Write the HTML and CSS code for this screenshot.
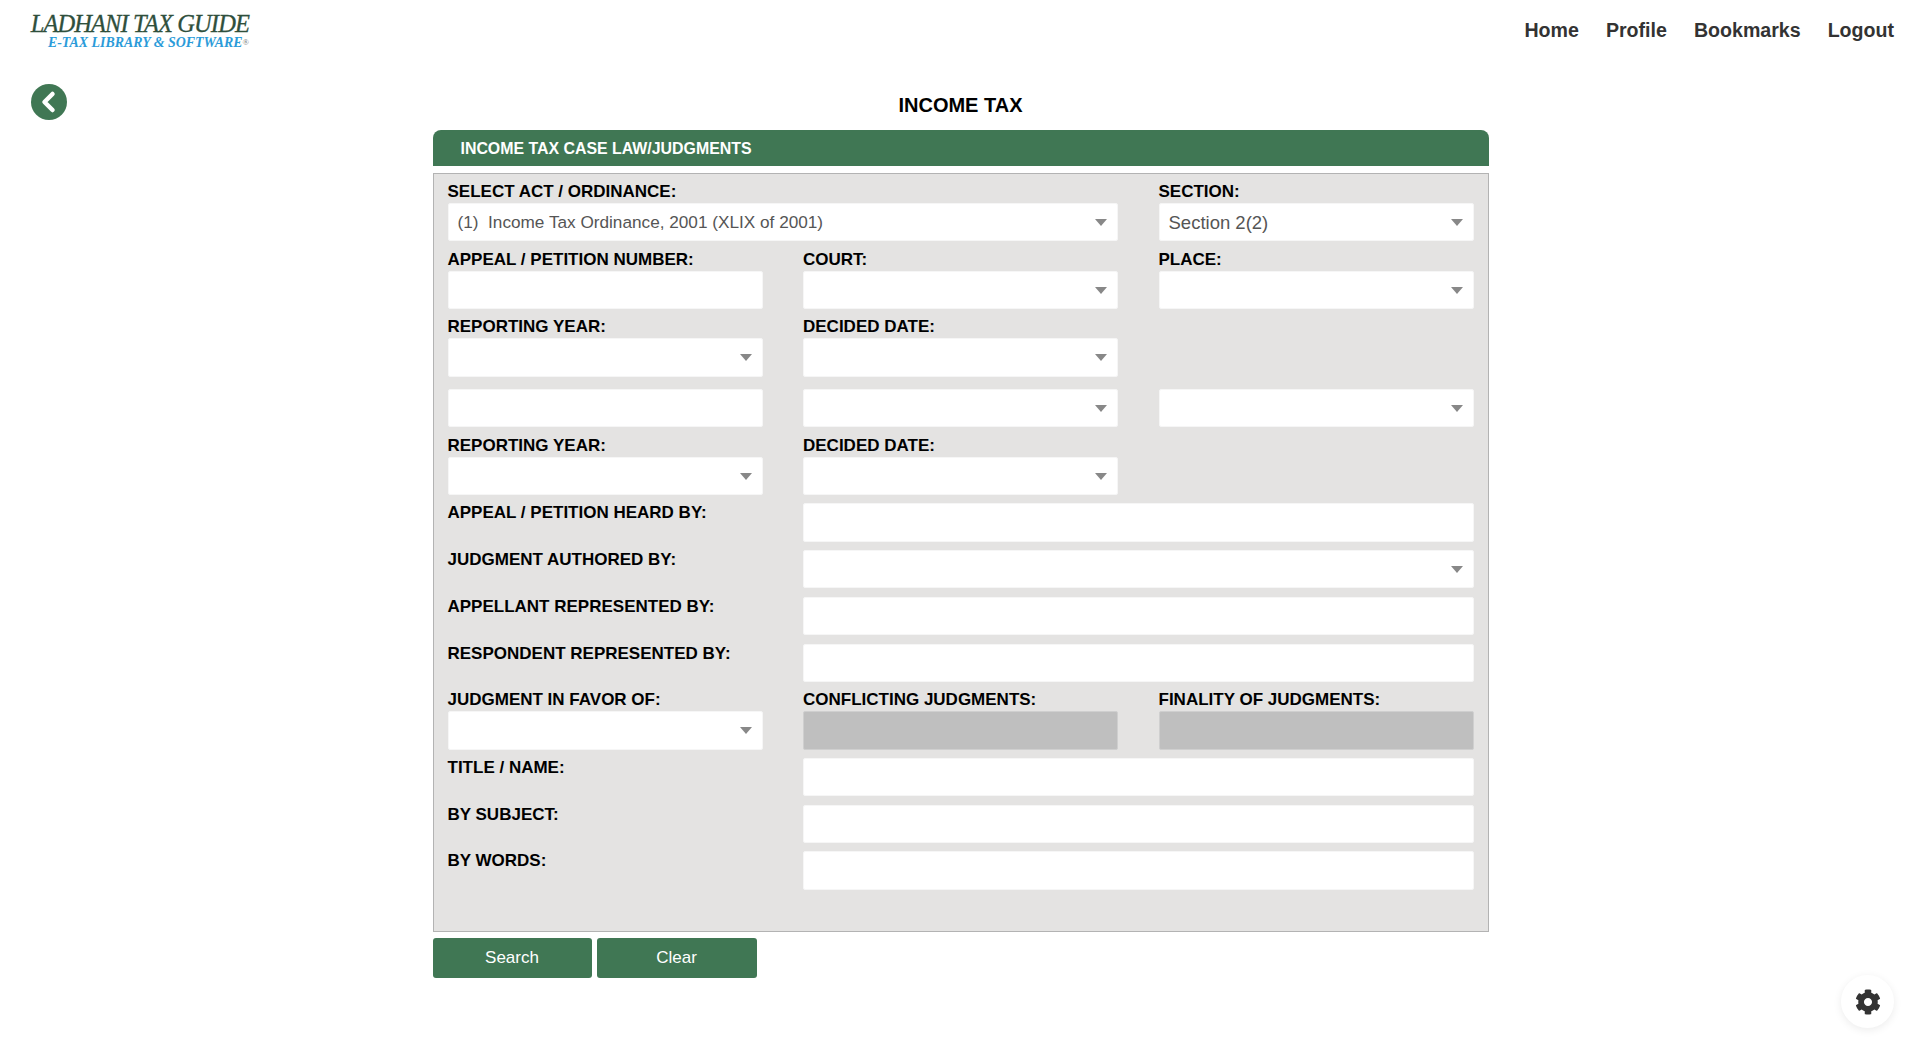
FILE: index.html
```html
<!DOCTYPE html>
<html lang="en">
<head>
  <meta charset="UTF-8">
  <title>Income Tax Case Law/Judgments</title>
  <link rel="stylesheet" href="styles.css">
</head>
<body>

  <!-- top bar -->
  <header class="topbar">
    <a class="logo" href="#">
      <span class="logo-main">LADHANI TAX GUIDE</span>
      <span class="logo-sub">E-TAX LIBRARY &amp; SOFTWARE<sup>®</sup></span>
    </a>
    <nav class="nav">
      <a href="#">Home</a>
      <a href="#">Profile</a>
      <a href="#">Bookmarks</a>
      <a href="#">Logout</a>
    </nav>
  </header>

  <div class="page">
    <div class="back-col">
      <a class="back" href="#" aria-label="Back">
        <svg viewBox="0 0 36 36" width="36" height="36"><path d="M21.5 10 L13.5 18 L21.5 26" fill="none" stroke="#fff" stroke-width="4.5" stroke-linecap="round" stroke-linejoin="round"/></svg>
      </a>
    </div>

    <main class="main">
      <h1 class="title">INCOME TAX</h1>
      <div class="panel-head">INCOME TAX CASE LAW/JUDGMENTS</div>

      <form class="panel">
        <div class="row">
          <div class="field span-2">
            <label>SELECT ACT / ORDINANCE:</label>
            <div class="select"><select><option>(1)&nbsp; Income Tax Ordinance, 2001 (XLIX of 2001)</option></select></div>
          </div>
          <div class="field">
            <label>SECTION:</label>
            <div class="select big"><select><option>Section 2(2)</option></select></div>
          </div>
        </div>

        <div class="row">
          <div class="field">
            <label>APPEAL / PETITION NUMBER:</label>
            <input type="text">
          </div>
          <div class="field">
            <label>COURT:</label>
            <div class="select"><select></select></div>
          </div>
          <div class="field">
            <label>PLACE:</label>
            <div class="select"><select></select></div>
          </div>
        </div>

        <div class="row">
          <div class="field">
            <label>REPORTING YEAR:</label>
            <div class="select"><select></select></div>
          </div>
          <div class="field">
            <label>DECIDED DATE:</label>
            <div class="select"><select></select></div>
          </div>
        </div>

        <div class="row no-label">
          <input type="text">
          <div class="select"><select></select></div>
          <div class="select"><select></select></div>
        </div>

        <div class="row">
          <div class="field">
            <label>REPORTING YEAR:</label>
            <div class="select"><select></select></div>
          </div>
          <div class="field">
            <label>DECIDED DATE:</label>
            <div class="select"><select></select></div>
          </div>
        </div>

        <div class="row inline">
          <label>APPEAL / PETITION HEARD BY:</label>
          <input class="span-2" type="text">
        </div>
        <div class="row inline">
          <label>JUDGMENT AUTHORED BY:</label>
          <div class="select span-2"><select></select></div>
        </div>
        <div class="row inline">
          <label>APPELLANT REPRESENTED BY:</label>
          <input class="span-2" type="text">
        </div>
        <div class="row inline">
          <label>RESPONDENT REPRESENTED BY:</label>
          <input class="span-2" type="text">
        </div>

        <div class="row">
          <div class="field">
            <label>JUDGMENT IN FAVOR OF:</label>
            <div class="select"><select></select></div>
          </div>
          <div class="field">
            <label>CONFLICTING JUDGMENTS:</label>
            <input type="text" disabled>
          </div>
          <div class="field">
            <label>FINALITY OF JUDGMENTS:</label>
            <input type="text" disabled>
          </div>
        </div>

        <div class="row inline">
          <label>TITLE / NAME:</label>
          <input class="span-2" type="text">
        </div>
        <div class="row inline">
          <label>BY SUBJECT:</label>
          <input class="span-2" type="text">
        </div>
        <div class="row inline">
          <label>BY WORDS:</label>
          <input class="span-2" type="text">
        </div>
      </form>

      <div class="actions">
        <button type="button" class="btn">Search</button>
        <button type="button" class="btn">Clear</button>
      </div>
    </main>
  </div>

  <!-- floating settings button -->
  <button type="button" class="settings" aria-label="Settings">
    <svg viewBox="0 0 512 512" width="26" height="26"><path fill="#333" d="M487.4 315.7l-42.6-24.6c4.3-23.2 4.3-47 0-70.2l42.6-24.6c4.9-2.8 7.1-8.6 5.5-14-11.1-35.6-30-67.8-54.7-94.6-3.8-4.1-10-5.1-14.8-2.3L380.8 110c-17.9-15.4-38.5-27.3-60.8-35.1V25.8c0-5.6-3.9-10.5-9.4-11.7-36.7-8.2-74.3-7.8-109.2 0-5.5 1.2-9.4 6.1-9.4 11.7V75c-22.2 7.9-42.8 19.8-60.8 35.1L88.7 85.5c-4.9-2.8-11-1.9-14.8 2.3-24.7 26.7-43.6 58.9-54.7 94.6-1.7 5.4.6 11.2 5.5 14L67.3 221c-4.3 23.2-4.3 47 0 70.2l-42.6 24.6c-4.9 2.8-7.1 8.6-5.5 14 11.1 35.6 30 67.8 54.7 94.6 3.8 4.1 10 5.1 14.8 2.3l42.6-24.6c17.9 15.4 38.5 27.3 60.8 35.1v49.2c0 5.6 3.9 10.5 9.4 11.7 36.7 8.2 74.3 7.8 109.2 0 5.5-1.2 9.4-6.1 9.4-11.7v-49.2c22.2-7.9 42.8-19.8 60.8-35.1l42.6 24.6c4.9 2.8 11 1.9 14.8-2.3 24.7-26.7 43.6-58.9 54.7-94.6 1.5-5.5-.7-11.3-5.6-14.1zM256 336c-44.1 0-80-35.9-80-80s35.9-80 80-80 80 35.9 80 80-35.9 80-80 80z"/></svg>
  </button>

</body>
</html>
```

FILE: styles.css
```css
* { box-sizing: border-box; }
body { margin: 0; background: #fff; color: #000; font-family: "Liberation Sans", Arial, sans-serif; }
a { text-decoration: none; }

.topbar { display: flex; justify-content: space-between; align-items: flex-start; height: 84px; padding: 13px 27px 0 26px; }
.logo { display: flex; flex-direction: column; align-items: flex-end; width: 223px; font-family: "Liberation Serif", serif; font-style: italic; }
.logo-main { font-size: 24.5px; line-height: 22px; color: #2f4f3c; letter-spacing: -0.9px; white-space: nowrap; -webkit-text-stroke: 0.3px #2f4f3c; }
.logo-sub { margin-top: 1px; font-size: 13.9px; line-height: 13px; font-weight: bold; color: #2b9bd9; white-space: nowrap; }
.logo-sub sup { font-size: 8.5px; line-height: 0; vertical-align: 2px; color: #777; font-style: normal; font-weight: normal; }
.nav { display: flex; gap: 27px; padding-top: 6px; }
.nav a { font-size: 19.6px; font-weight: bold; color: #333; }

.page { display: grid; grid-template-columns: 1fr 1056px 1fr; }
.back-col { padding-left: 31px; }
.back { display: block; width: 36px; height: 36px; border-radius: 50%; background: #407754; }
.back svg { display: block; }

.title { margin: 8px 0 13px; font-size: 20px; line-height: 26px; height: 25px; font-weight: bold; text-align: center; }
.panel-head { height: 36px; padding-left: 28px; border-radius: 8px 8px 0 0; background: #407754; color: #fff; font-size: 15.9px; font-weight: bold; line-height: 37px; }

.panel { margin-top: 7px; height: 759px; padding: 7px 14px 0; border: 1px solid #b3b3b3; background: #e4e3e2; }
.row { display: grid; grid-template-columns: repeat(3, 1fr); column-gap: 40.5px; margin-bottom: 7.2px; }
.row.no-label { margin-top: 12.4px; }
.row.inline { padding-top: 1.2px; }
.span-2 { grid-column: span 2; }
.field label { display: block; height: 22px; line-height: 21px; }
label { font-size: 17px; font-weight: bold; white-space: nowrap; }
.inline label { line-height: 20px; }

input, select { display: block; width: 100%; height: 38.4px; border: 1px solid #f6f6f6; border-radius: 2px; background: #fff; font-family: inherit; }
input:disabled { border-color: #cfcfcf; background: #bfbfbf; }
.select { position: relative; }
.select select { appearance: none; padding: 0 30px 0 9px; font-size: 17.2px; color: #555; }
.select.big select { font-size: 18.5px; }
.select::after { content: ""; position: absolute; right: 11px; top: 16px; border-style: solid; border-width: 7px 6px 0; border-color: #888 transparent transparent; }

.actions { display: flex; gap: 5px; margin-top: 6px; padding-bottom: 60px; }
.btn { height: 40px; border: 0; border-radius: 3px; background: #407754; color: #fff; font-family: inherit; font-size: 17px; }
.btn:first-child { width: 159px; }
.btn:last-child { width: 160px; }

.settings { position: fixed; right: 27px; bottom: 26px; display: flex; align-items: center; justify-content: center; width: 53px; height: 53px; padding: 0; border: 0; border-radius: 50%; background: #fff; box-shadow: 0 2px 8px rgba(0,0,0,.08); }
```
